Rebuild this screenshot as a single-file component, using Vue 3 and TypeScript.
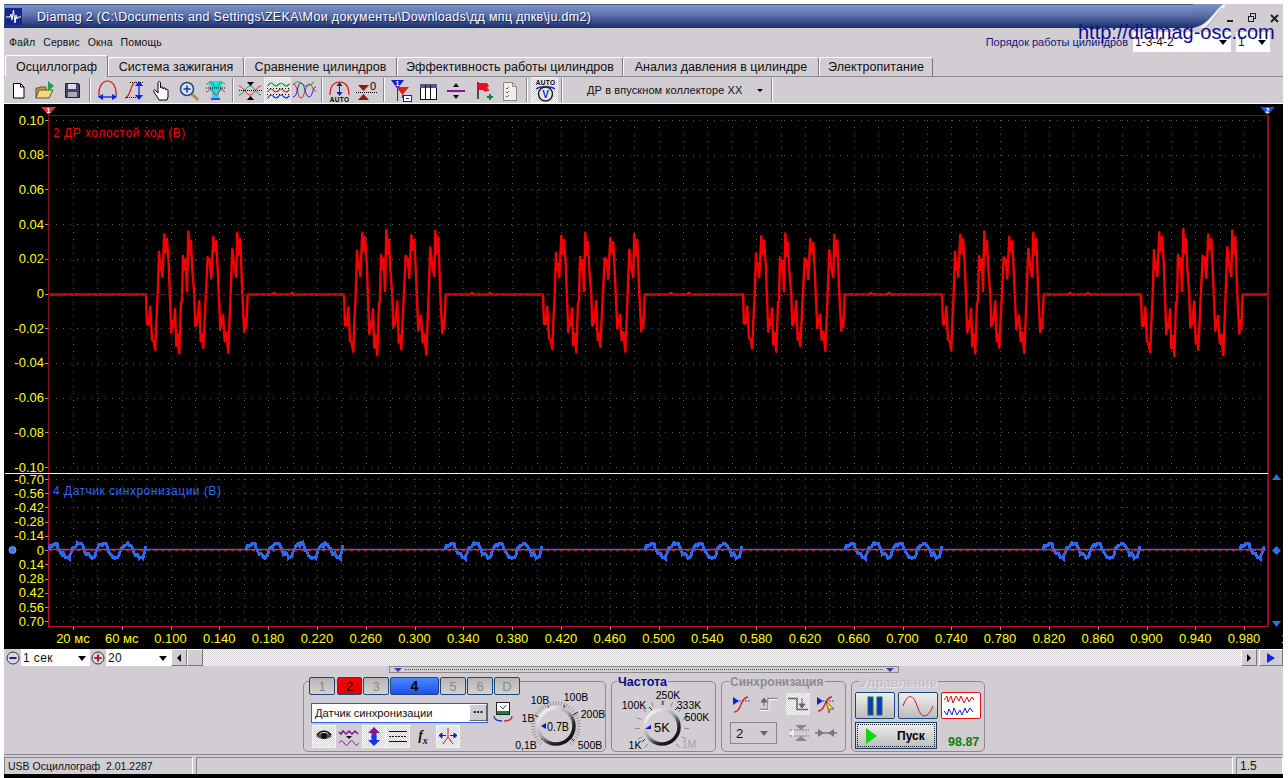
<template>
  <div class="window">
    <div class="titlebar">
      <div class="title-fill">
        <svg class="app-icon" width="17" height="17" viewBox="0 0 17 17">
          <rect width="17" height="17" fill="#16268a" />
          <path d="M1 9h4l1-3 1 6 1.500-10 1.500 13 1-8 1 4 1-2h3" fill="none" stroke="#fff" stroke-width="1" />
        </svg>
        <span class="title-text">Diamag 2 (C:\Documents and Settings\ZEKA\Мои документы\Downloads\дд мпц дпкв\ju.dm2)</span>
      </div>
      <svg class="swoosh" width="32" height="24" viewBox="0 0 32 24">
        <defs>
          <linearGradient id="tg" x1="0" y1="0" x2="0" y2="1">
            <stop offset="0" stop-color="#7d92c8" />
            <stop offset="0.45" stop-color="#5a72ad" />
            <stop offset="1" stop-color="#1b2c6c" />
          </linearGradient>
        </defs>
        <path d="M0 0H32C22 4 18 20 0 24Z" fill="url(#tg)" />
        <path d="M32 1C24 5 20 18 8 24" fill="none" stroke="#f2f3f6" stroke-width="3" />
        <path d="M29 4C24 9 20 17 12 24" fill="none" stroke="#9fa7bd" stroke-width="1" />
      </svg>
      <svg class="win-btns" width="58" height="24" viewBox="1225 4 58 24">
        <rect x="1227" y="20" width="6" height="2" fill="#222" />
        <rect x="1250.500" y="13.500" width="5" height="5" fill="none" stroke="#222" />
        <rect x="1248.500" y="16.500" width="5" height="5" fill="#d1cdd2" stroke="#222" />
        <path d="M1271 15l7 7M1278 15l-7 7" stroke="#222" stroke-width="2" />
      </svg>
    </div>

    <div class="menubar">
      <span class="menu-item" v-for="m in menus" :key="m">{{ m }}</span>
      <div class="order">
        <span class="order-label">Порядок работы цилиндров</span>
        <div class="combo order-combo">1-3-4-2<i class="drop"></i></div>
        <div class="combo order-combo small">1<i class="drop"></i></div>
      </div>
    </div>
    <span class="watermark">http://diamag-osc.com</span>

    <div class="tabs">
      <div v-for="(t, i) in tabs" :key="t.label" class="tab" :class="{ active: i === 0 }" :style="{ width: t.w + 'px' }">{{ t.label }}</div>
    </div>

    <div class="toolbar">
      <button class="tb"><svg width="27" height="27"><path d="M8.500 6.500h7l3.500 3.500v11H8.500z" fill="#fff" stroke="#000" /><path d="M15.500 6.500v3.500H19" fill="none" stroke="#000" /></svg></button>
      <button class="tb"><svg width="27" height="27"><path d="M4 21V11h3l1-1h6v3" fill="#c8a040" stroke="#554" /><path d="M4 21l3-8h14l-4 8z" fill="#f4d878" stroke="#554" /><path d="M16 4l6 5-6 5z" fill="#20a050" /></svg></button>
      <button class="tb"><svg width="27" height="27"><path d="M6.500 6.500h13l1 1v13h-14z" fill="#45457c" stroke="#223" /><rect x="9" y="7" width="8" height="5" fill="#ddd" /><rect x="9" y="15" width="9" height="5" fill="#aaa" /></svg></button>
      <i class="sep"></i>
      <button class="tb"><svg width="27" height="27"><path d="M5 20C4 9 9 4 13.500 4S23 9 22 20" fill="none" stroke="#e01010" stroke-width="1.200" /><path d="M6 20h15" stroke="#1020e0" stroke-width="1.300" /><path d="M4 20l5-3v6zM23 20l-5-3v6z" fill="#1020e0" /></svg></button>
      <button class="tb"><svg width="27" height="27"><path d="M9 5.500h13M4 20.500h13" stroke="#000" stroke-dasharray="1 1" /><path d="M4 21C10 21 9 5 15 5" fill="none" stroke="#e01010" stroke-width="1.200" /><path d="M18 8v12" stroke="#1020e0" stroke-width="1.300" /><path d="M18 4l-4 5h8zM18 23l-4-5h8z" fill="#1020e0" /></svg></button>
      <button class="tb"><svg width="27" height="27"><path d="M10 21l-4-6c-1-2 1-3 2-1l2 2V6c0-2 2.500-2 2.500 0v5c0-1.500 2.500-1.500 2.500 0v1c0-1.500 2.500-1.500 2.500 0v1c0-1.500 2.500-1 2.500 .5V20l-1 3H11z" fill="#fff" stroke="#000" /></svg></button>
      <button class="tb"><svg width="27" height="27"><path d="M17 17l6 6" stroke="#b09048" stroke-width="3" /><circle cx="12" cy="12" r="6.500" fill="#d8e4f4" stroke="#284878" stroke-width="1.600" /><path d="M8.500 12h7M12 8.500v7" stroke="#1838a8" stroke-width="1.600" /></svg></button>
      <button class="tb"><svg width="27" height="27"><path d="M7 4h13v8l-3 4v5H10v-5l-3-4z" fill="#20e0e0" /><path d="M4 7c3 0 3-2 5-2s3 6 5 6 3-6 5-6 2 2 4 2" fill="none" stroke="#10a040" /><path d="M4 15c3 0 3-3 5-3s3 6 5 6 3-6 5-6 2 3 4 3" fill="none" stroke="#e02020" /><path d="M4 11h19" stroke="#000" stroke-dasharray="1 1" /><path d="M9 22h9" stroke="#1020e0" stroke-width="1.500" /></svg></button>
      <i class="sep"></i>
      <button class="tb"><svg width="27" height="27"><path d="M2 9c4 0 7 9 11 9s7-9 11-9" fill="none" stroke="#e02020" /><path d="M2 18c4 0 7-9 11-9s7 9 11 9" fill="none" stroke="#10a040" /><path d="M2 13.500h23" stroke="#000" stroke-dasharray="1 1" /><path d="M10 5h7l-3.500 4zM10 23h7l-3.500-4z" fill="#000" /></svg></button>
      <button class="tb pressed"><svg width="27" height="27"><path v-for="(c, i) in ['#109040', '#e02020', '#1030e0']" :key="c" :d="`M2 ${9 + i * 6}c2 0 2-3 4-3s3 3 5 3 3-3 5-3 3 3 5 3 2-2 4-2`" fill="none" :stroke="c" stroke-width="1.200" /><path d="M2 11.500h23M2 17.500h23" stroke="#000" stroke-dasharray="1 2" /></svg></button>
      <button class="tb"><svg width="27" height="27"><path d="M2 7c5 0 4 14 8 14s4-14 8-14 3 7 7 7" fill="none" stroke="#e02020" /><path d="M2 20c5 0 4-14 8-14s4 14 8 14 3-10 7-10" fill="none" stroke="#1030e0" /><path d="M2 8c3-4 6-4 9-1s6 3 12-2" fill="none" stroke="#109040" /></svg></button>
      <i class="sep"></i>
      <button class="tb"><svg width="27" height="27"><path d="M4 18C4 9 8 5 13.500 5S23 9 23 18" fill="none" stroke="#e01010" stroke-width="1.200" /><path d="M13.500 7v10" stroke="#1020a0" /><path d="M13.500 5l-3 4h6zM13.500 19l-3-4h6z" fill="#1020a0" /><text x="13.500" y="25" class="tiny-auto">AUTO</text></svg></button>
      <button class="tb"><svg width="27" height="27"><path d="M5 8h11l-5.500 6zM5 23h11l-5.500-6z" fill="#8a1c1c" /><path d="M3 15.500h21" stroke="#000" stroke-dasharray="1 1" /><text x="20" y="13" class="tb-zero">0</text></svg></button>
      <i class="sep"></i>
      <button class="tb"><svg width="27" height="27"><path d="M3 3h13l-6.500 9z" fill="#1020d0" /><path d="M8 10h13l-6.500 8z" fill="#e02020" /><path d="M9.500 12v12M14.500 18v3" stroke="#333" /><text x="9.500" y="9" class="tb-tag">1</text><rect x="15.500" y="18.500" width="8" height="6" fill="#fff" stroke="#1a2a70" /><path d="M18 21.500h3" stroke="#1a2a70" /></svg></button>
      <button class="tb"><svg width="27" height="27"><rect x="5.500" y="7.500" width="16" height="15" fill="#fff" stroke="#112" /><rect x="5" y="7" width="17" height="4" fill="#50588c" /><path d="M10.500 8v14M15.500 8v14" stroke="#112" /></svg></button>
      <button class="tb"><svg width="27" height="27"><rect x="5" y="13" width="18" height="2" fill="#801890" /><path d="M11 10h6l-3-4zM11 18h6l-3 4z" fill="#111" /></svg></button>
      <button class="tb"><svg width="27" height="27"><path d="M9 5v17" stroke="#222" stroke-width="1.500" /><path d="M9 6h9l2 3-2 2 3 2-5 2-2-2H9z" fill="#e81020" /><path d="M18 20h6M21 17v6" stroke="#108030" stroke-width="2" /></svg></button>
      <button class="tb"><svg width="27" height="27"><path d="M7.500 5.500h9l4 4v14h-13z" fill="#eeeeea" stroke="#888" /><path d="M16.500 5.500v4h4" fill="none" stroke="#888" /><path d="M10 11l1 1 2-2M10 15l1 1 2-2M10 19l1 1 2-2" fill="none" stroke="#666" /></svg></button>
      <i class="sep"></i>
      <button class="tb pressed"><svg width="27" height="27"><text x="13.500" y="8" class="tiny-auto">AUTO</text><path d="M4 12c4-3 15-3 19 0" fill="none" stroke="#1030d0" stroke-width="1.500" /><circle cx="13.500" cy="17" r="7" fill="#e8e8e8" stroke="#222" stroke-width="1.500" /><text x="13.500" y="21" class="tb-v">V</text></svg></button>
      <i class="sep last"></i>
      <div class="tb-combo"><span>ДР в впускном коллекторе ХХ</span><i class="drop tiny"></i></div>
      <i class="sep"></i>
    </div>

    <div class="scope">
      <svg class="plot" width="1279" height="545" viewBox="4 104 1279 545">
        <defs>
          <clipPath id="plotClip"><rect x="48" y="116" width="1219" height="510" /></clipPath>
        </defs>
        <path :d="gridPath" class="grid" />
        <line x1="48.500" y1="107" x2="48.500" y2="473" stroke="#8a0c14" />
        <line x1="48.500" y1="473" x2="48.500" y2="626" stroke="#c0102c" />
        <line x1="48" y1="115.500" x2="1268" y2="115.500" stroke="#7c0a10" />
        <line x1="48" y1="626.500" x2="1268" y2="626.500" stroke="#c0102c" />
        <line x1="1268.500" y1="115" x2="1268.500" y2="626" stroke="#a0101c" />
        <line x1="1267.500" y1="107" x2="1267.500" y2="626" stroke="#1818d8" />
        <path :d="tickPath" stroke="#999" fill="none" />
        <line x1="5" y1="473.500" x2="1268" y2="473.500" stroke="#f4f4f4" />

        <g clip-path="url(#plotClip)">
          <polyline :points="redLine" class="trace-red" />
          <line x1="48.500" x2="1267" y1="294.500" y2="294.500" class="zero-top" />
          <line x1="49" x2="1266" y1="549.500" y2="549.500" stroke="#2c68f0" stroke-width="1.500" />
          <polyline v-for="(b, i) in blueBursts" :key="i" :points="b" class="trace-blue" />
          <line x1="49" x2="1266" y1="550.500" y2="550.500" class="zero-low" />
        </g>

        <text v-for="l in yLabels" :key="l.y" class="axis end" x="44" :y="l.y">{{ l.t }}</text>
        <text v-for="l in xLabels" :key="l.x" class="axis mid" :x="l.x" y="638">{{ l.t }}</text>
        <text class="axis" x="1281" y="638">1</text>
        <text class="chan red" x="53" y="137">2 ДР холостой ход (В)</text>
        <text class="chan blue" x="53" y="495">4 Датчик синхронизации (В)</text>

        <path d="M41 107h15l-7.500 8z" fill="#f02858" />
        <text x="48.500" y="113" class="marker">1</text>
        <path d="M1260 107h15l-7.500 8z" fill="#1c4cf0" />
        <text x="1267.500" y="113" class="marker">2</text>
        <circle cx="12.500" cy="550" r="3.500" fill="#3c78f0" stroke="#7ca4f4" />
        <path d="M1272 480l4.500-6 4.500 6zM1272 621l4.500 6 4.500-6zM1276.500 546l4.500 4.500-4.500 4.500-4.500-4.500z" fill="#2c70e8" />
      </svg>
    </div>

    <div class="scrollrow">
      <button class="round"><svg width="14" height="14"><circle cx="7" cy="7" r="6" fill="#d8d8e0" stroke="#333" /><path d="M3.500 7h7" stroke="#1020a0" stroke-width="2" /></svg></button>
      <div class="combo flat w1">1 сек<i class="drop"></i></div>
      <button class="round"><svg width="14" height="14"><circle cx="7" cy="7" r="6" fill="#d8d8e0" stroke="#333" /><path d="M3.500 7h7M7 3.500v7" stroke="#c01020" stroke-width="2" /></svg></button>
      <div class="combo flat w2">20<i class="drop"></i></div>
      <button class="sb"><i class="tri-left"></i></button>
      <button class="sb thumb"></button>
      <div class="track"></div>
      <button class="sb"><i class="tri-right"></i></button>
      <button class="sb play"><i class="tri-blue"></i></button>
    </div>

    <div class="panel">
      <div class="splitter"><i class="spl-tri"></i><span class="spl-dots"></span><i class="spl-tri"></i></div>
      <div class="groups">
        <div class="group g1">
          <div class="chan-col">
            <div class="chan-btns">
              <button v-for="c in channels" :key="c.t" class="ch" :class="c.cls">{{ c.t }}</button>
            </div>
            <div class="sensor-row">
              <div class="sensor">
                <span>Датчик синхронизации</span>
                <button class="dots">...</button>
              </div>
              <svg class="meter" width="20" height="21" viewBox="0 0 20 21"><rect x="3.500" y=".5" width="13" height="12" fill="#fff" stroke="#222" /><rect x="4" y="9" width="12" height="3" fill="#108040" /><path d="M7 4l3 3 3-4" fill="none" stroke="#444" /><path d="M1 14c0 5 6 5 8 5" fill="none" stroke="#1030d0" stroke-width="1.300" /><path d="M19 14c0 5-6 5-8 5" fill="none" stroke="#e02020" stroke-width="1.300" /></svg>
            </div>
            <div class="tool-row">
              <button class="gb pressed"><svg width="22" height="21"><path d="M3 10c4-4 12-4 16 0-4 4-12 4-16 0z" fill="#555" /><circle cx="11" cy="10" r="3" fill="#111" /><path d="M4 9c4-5 10-5 14 0" fill="none" stroke="#111" stroke-width="1.500" /></svg></button>
              <button class="gb plain"><svg width="22" height="21"><path d="M1 6l2 2 2-3 3 3 3-3 3 3 3-3 3 3" fill="none" stroke="#801890" stroke-width="1.500" /><path d="M8 10h6l-3 3z" fill="#111" /><path d="M1 17c2-3 3-3 5 0s3 3 5 0 3-3 5 0 3 2 5 0" fill="none" stroke="#801890" /></svg></button>
              <button class="gb pressed"><svg width="22" height="21"><path d="M11 1l6 6h-3.500v5h-5V7H5z" fill="#801890" /><path d="M11 20l6-6h-3.500V10h-5v4H5z" fill="#1038e8" /></svg></button>
              <button class="gb pressed"><svg width="22" height="21"><path d="M2 5.500h18M2 15.500h18" stroke="#111" /><path d="M2 10.500h18" stroke="#111" stroke-dasharray="2 1" /></svg></button>
              <span class="fx">f<sub>x</sub></span>
              <button class="gb pressed"><svg width="22" height="21"><path d="M11 2v9M11 11l-5 7M11 11l5 7" stroke="#d02020" fill="none" /><path d="M2 9.500h7M2 9.500l3-2.500v5zM20 9.500h-7M20 9.500l-3-2.500v5z" stroke="#1020c0" fill="#1020c0" /></svg></button>
            </div>
          </div>
          <svg class="knob" width="102" height="71" viewBox="504 681 102 71">
            <defs>
              <linearGradient id="kg" x1="0.150" y1="0.100" x2="0.850" y2="0.900">
                <stop offset="0" stop-color="#f0f0f0" />
                <stop offset="0.450" stop-color="#a8a8a8" />
                <stop offset="0.750" stop-color="#2a2a2a" />
                <stop offset="1" stop-color="#101010" />
              </linearGradient>
            </defs>
            <path :d="knobTicks1" stroke="#989898" stroke-width="1" />
            <path d="M535 714l5 3M548 705l2 3M565 704l-2 4M578 711l-5 3M541 739l3-3M571 737l3 3" stroke="#222" />
            <circle cx="556" cy="725" r="18" fill="none" stroke="url(#kg)" stroke-width="3.500" />
            <path d="M541 725l5-3v6z" fill="#1010e0" />
            <text x="558" y="730" class="knob-val" textLength="22" lengthAdjust="spacingAndGlyphs">0.7В</text>
            <text v-for="l in knob1" :key="l.t" class="knob-lab" :x="l.x" :y="l.y">{{ l.t }}</text>
          </svg>
        </div>

        <div class="group g2">
          <span class="legend navy">Частота</span>
          <svg class="knob" width="104" height="70" viewBox="612 682 104 70">
            <path :d="knobTicks2" stroke="#8a8a8a" stroke-width="1" />
            <path d="M649 707l3 3M663 701v4M678 707l-3 3M688 716l-4 2M642 742l3-3" stroke="#222" />
            <circle cx="662" cy="727" r="17" fill="none" stroke="url(#kg)" stroke-width="3.500" />
            <path d="M645 729l6-4v4z" fill="#1010e0" />
            <text x="662" y="732" class="knob-val">5K</text>
            <text v-for="l in knob2" :key="l.t" class="knob-lab" :class="{ off: l.t === '1M' }" :x="l.x" :y="l.y">{{ l.t }}</text>
          </svg>
        </div>

        <div class="group g3">
          <span class="legend grey">Синхронизация</span>
          <div class="sync-row">
            <button class="sy"><svg width="24" height="22"><path d="M3 8h18" stroke="#1020d0" stroke-dasharray="1.500 1.500" /><path d="M3 4l6 4-6 4z" fill="#1020d0" /><path d="M4 19c8 0 6-15 14-15" fill="none" stroke="#e01818" stroke-width="1.300" /></svg></button>
            <button class="sy"><svg width="24" height="22"><path d="M2 16.500h8v-11h10" fill="none" stroke="#888" stroke-width="1.500" /><path d="M2 17.500h9v-11h9" fill="none" stroke="#fff" /><path d="M6 13V7M6 5l-3 4h6z" stroke="#666" fill="#666" /></svg></button>
            <button class="sy pressed"><svg width="24" height="22"><path d="M2 5.500h9v11h11" fill="none" stroke="#666" stroke-width="1.500" /><path d="M16 5v8M16 15l-3-4h6z" stroke="#666" fill="#666" /></svg></button>
            <button class="sy"><svg width="24" height="22"><path d="M3 8h18" stroke="#1020d0" stroke-dasharray="1.500 1.500" /><path d="M3 4l6 4-6 4z" fill="#1020d0" /><path d="M4 18c8 0 6-14 14-14" fill="none" stroke="#e01818" stroke-width="1.300" /><path d="M12 8l8 8-4 0-1 4z" fill="#ffd820" stroke="#222" stroke-width=".6" /></svg></button>
          </div>
          <div class="sync-row second">
            <div class="combo sync-combo">2<i class="drop grey-drop"></i></div>
            <button class="sy wide"><svg width="24" height="22"><path d="M3 8h19M3 14h19" stroke="#777" stroke-dasharray="2 1" /><path d="M8 3h12l-6 5zM8 19h12l-6-5z" fill="#888" /><path d="M2 11l5-4v8z" fill="#eee" /></svg></button>
            <button class="sy"><svg width="24" height="22"><path d="M1 11h22" stroke="#777" stroke-width="1.500" /><path d="M10 11l-6-4v8zM14 11l6-4v8z" fill="#777" /></svg></button>
          </div>
        </div>

        <div class="group g4">
          <span class="legend faint">Управление</span>
          <div class="ctl-row">
            <button class="ctl"><svg width="18" height="20"><rect x="2" y="1" width="5" height="18" fill="#1030d0" stroke="#108030" /><rect x="11" y="1" width="5" height="18" fill="#1030d0" stroke="#108030" /></svg></button>
            <button class="ctl"><svg width="32" height="22"><path d="M1 11C5 0 9 0 12 4c3 4 5 17 10 17 4 0 7-5 9-10" fill="none" stroke="#e01010" /></svg></button>
            <button class="ctl mode"><svg width="36" height="23"><path d="M1 6l3-4 1 6 3-6 2 7 3-7 3 5 2-5 3 7 3-6 2 5 3-5 2 3" fill="none" stroke="#e01010" /><path d="M1 17l3 4 2-6 3 6 2-7 3 7 3-5 2 5 3-7 2 5 3-5 3 4" fill="none" stroke="#1020d0" /></svg></button>
          </div>
          <div class="ctl-row">
            <button class="start"><i class="tri-green"></i><b>Пуск</b></button>
            <span class="rate">98.87</span>
          </div>
        </div>
      </div>
    </div>

    <div class="statusbar">
      <div class="cell s1">USB Осциллограф&nbsp;&nbsp;2.01.2287</div>
      <div class="cell s2"></div>
      <div class="cell s3">1.5</div>
    </div>
  </div>
</template>

<script setup lang="ts">
const menus = ['Файл', 'Сервис', 'Окна', 'Помощь']
const tabs = [
  { label: 'Осциллограф', w: 103 },
  { label: 'Система зажигания', w: 136 },
  { label: 'Сравнение цилиндров', w: 153 },
  { label: 'Эффективность работы цилиндров', w: 226 },
  { label: 'Анализ давления в цилиндре', w: 196 },
  { label: 'Электропитание', w: 114 },
]
const channels = [
  { t: '1', cls: '' },
  { t: '2', cls: 'on-red' },
  { t: '3', cls: '' },
  { t: '4', cls: 'on-blue' },
  { t: '5', cls: '' },
  { t: '6', cls: '' },
  { t: 'D', cls: '' },
]

const STEP_X = 24.4
const LEFT = 48.5

const yTop = Array.from({ length: 11 }, (_, i) => {
  const v = 0.1 - i * 0.02
  return { y: 120 + i * 34.7, t: Math.abs(v) < 0.001 ? '0' : v.toFixed(2) }
})
const yLow = Array.from({ length: 11 }, (_, i) => {
  const v = -0.7 + i * 0.14
  return { y: 479 + i * 14.23, t: Math.abs(v) < 0.001 ? '0' : v.toFixed(2) }
})
const yLabels = [...yTop, ...yLow]

const xLabels = Array.from({ length: 25 }, (_, i) => {
  const k = 1 + i * 2
  const t = k === 1 ? '20 мс' : k === 3 ? '60 мс' : (k * 0.02).toFixed(3)
  return { x: LEFT + k * STEP_X, t }
})

let grid = ''
for (const l of yLabels) grid += `M49 ${Math.round(l.y) + 0.5}H1267`
for (let k = 1; k < 50; k++) {
  const x = Math.round(LEFT + k * STEP_X) + 0.5
  grid += `M${x} 120V467M${x} 479V625`
}
const gridPath = grid

let ticks = ''
for (const l of yLabels) ticks += `M45 ${Math.round(l.y) + 0.5}H48`
for (const l of xLabels) ticks += `M${Math.round(l.x) + 0.5} 627V630`
const tickPath = ticks

// traced from the reference: one burst of each channel, in zoomed pixels
const redShape = [47,225,50,315,55,315,60,262,65,360,70,365,75,392,78,310,82,225,86,97,90,150,93,130,96,172,102,45,105,100,110,58,115,130,120,260,123,340,127,305,130,320,134,268,138,380,142,345,147,402,152,250,155,245,158,110,162,150,166,120,170,215,174,36,178,105,182,65,186,150,192,225,195,320,200,310,207,245,211,365,215,345,219,385,225,260,232,113,238,120,243,177,249,52,253,95,258,65,263,170,270,330,273,310,278,287,283,365,288,340,294,400,300,250,306,88,310,125,313,150,318,172,321,40,325,105,330,58,336,225,342,338,345,300,348,325,352,225]
const blueShape = [146,265,150,255,160,255,165,248,172,250,178,270,185,282,190,278,197,290,207,292,212,278,218,262,225,262,232,250,245,250,250,262,258,282,265,278,272,290,282,292,290,270,295,255,305,252,318,248,325,270,332,283,340,292,355,292,360,275,368,258,378,255,385,248,392,255,400,268,405,285,412,280,418,292,428,292,435,270,438,255,441,268]

const redStarts = [146, 344, 543, 743, 942, 1141]
const redScale = [1, 1.03, 0.98, 0.97, 1, 1.04]
const blueStarts = [48.5, 246, 445, 645, 845, 1043, 1240]

const redPts: string[] = ['49,294.5']
redStarts.forEach((s, b) => {
  for (let i = 0; i < redShape.length; i += 2) {
    const x = s + (redShape[i] - 47) / 3
    const y = 294.5 + ((redShape[i + 1] - 225) / 3) * redScale[b]
    redPts.push(`${x.toFixed(1)},${y.toFixed(1)}`)
  }
  const end = s + 102
  redPts.push(`${end + 24},294.5`, `${end + 26},293`, `${end + 28},294.5`, `${end + 42},294.5`, `${end + 44},293`, `${end + 46},294.5`)
})
redPts.push('1266,294.5')
const redLine = redPts.join(' ')

// stair-stepped, like the low resolution trace in the picture
const blueBursts = blueStarts.map((s) => {
  const pts: string[] = []
  let step = 0
  for (let i = 0; i + 3 < blueShape.length; i += 2) {
    const x0 = s + (blueShape[i] - 146) / 3
    const x1 = s + (blueShape[i + 2] - 146) / 3
    const y0 = 550 + (blueShape[i + 1] - 270) / 3
    const y1 = 550 + (blueShape[i + 3] - 270) / 3
    for (let x = x0; x < x1; x += 1) {
      if (x > 1265) break
      const y = y0 + ((y1 - y0) * (x - x0)) / (x1 - x0) + (step++ % 4 === 0 ? 1 : 0)
      pts.push(`${Math.round(x)},${Math.round(y)}`)
    }
  }
  return pts.join(' ')
})

function ring(cx: number, cy: number, r1: number, r2: number, from: number, to: number, n: number) {
  let d = ''
  for (let i = 0; i <= n; i++) {
    const a = ((from + ((to - from) * i) / n) * Math.PI) / 180
    const c = Math.cos(a)
    const s = Math.sin(a)
    d += `M${(cx + r1 * c).toFixed(1)} ${(cy + r1 * s).toFixed(1)}L${(cx + r2 * c).toFixed(1)} ${(cy + r2 * s).toFixed(1)}`
  }
  return d
}
const knobTicks1 = ring(556, 725, 21, 25, 130, 410, 40)
const knobTicks2 = ring(662, 727, 22, 27, 130, 410, 12)

const knob1 = [
  { t: '10В', x: 540, y: 703 },
  { t: '100В', x: 576, y: 700 },
  { t: '1В', x: 528, y: 721 },
  { t: '200В', x: 593, y: 717 },
  { t: '0,1В', x: 526, y: 748 },
  { t: '500В', x: 590, y: 748 },
]
const knob2 = [
  { t: '100K', x: 634, y: 709 },
  { t: '250K', x: 668, y: 699 },
  { t: '333K', x: 689, y: 709 },
  { t: '500K', x: 697, y: 721 },
  { t: '1K', x: 635, y: 749 },
  { t: '1M', x: 689, y: 748 },
]
</script>

<style scoped>
.window {
  position: relative;
  margin: 4px 0 0 4px;
  width: 1279px;
  height: 774px;
  background: #000;
  overflow: hidden;
  display: flex;
  flex-direction: column;
  font-family: "Liberation Sans", Arial, sans-serif;
  font-size: 12px;
  color: #111;
}

button {
  padding: 0;
  margin: 0;
  border: none;
  background: none;
  font-family: inherit;
  display: flex;
  align-items: center;
  justify-content: center;
}

i {
  display: block;
}

.titlebar {
  display: flex;
  height: 24px;
  flex: none;
  background: #d1cdd2;
}

.title-fill {
  width: 1193px;
  display: flex;
  align-items: center;
  gap: 15px;
  padding-left: 1px;
  box-sizing: border-box;
  background: linear-gradient(#7d92c8 0, #5a72ad 45%, #1b2c6c 100%);
  border-top: 1px solid #46598f;
}

.title-text {
  color: #fff;
  font-size: 12.5px;
  letter-spacing: 0.31px;
  text-shadow: 1px 1px 1px #101c50;
  white-space: nowrap;
}

.swoosh {
  flex: none;
}

.win-btns {
  flex: none;
  margin-left: auto;
}

.menubar {
  display: flex;
  align-items: center;
  height: 27px;
  flex: none;
  padding-left: 5px;
  gap: 8px;
  background: #d1cdd2;
  font-size: 10.5px;
  letter-spacing: 0.1px;
}

.order {
  margin-left: auto;
  display: flex;
  align-items: center;
  gap: 5px;
  padding-right: 13px;
  letter-spacing: 0;
}

.order-label {
  color: #14147c;
  font-size: 11px;
}

.combo {
  position: relative;
  background: #fff;
  display: flex;
  align-items: center;
  box-sizing: border-box;
  font-size: 12px;
}

.order-combo {
  width: 98px;
  height: 20px;
  padding-left: 2px;
}

.order-combo.small {
  width: 34px;
}

.drop {
  position: absolute;
  right: 4px;
  top: calc(50% - 2px);
  width: 0;
  height: 0;
  border: 4px solid transparent;
  border-top: 5px solid #000;
  border-bottom: none;
}

.drop.tiny {
  position: static;
  margin-left: 15px;
  border-width: 3px;
  border-top-width: 3px;
  border-bottom: none;
}

.grey-drop {
  border-top-color: #666;
  right: 8px;
}

.watermark {
  position: absolute;
  left: 1074px;
  top: 17px;
  font-size: 20px;
  color: #0d0d8c;
  white-space: nowrap;
}

.tabs {
  display: flex;
  align-items: flex-end;
  height: 21px;
  flex: none;
  background: #d1cdd2;
  padding-left: 1px;
}

.tab {
  height: 19px;
  flex: none;
  box-sizing: border-box;
  display: flex;
  align-items: center;
  justify-content: center;
  font-size: 12.5px;
  letter-spacing: 0.05px;
  border: 1px solid #fff;
  border-bottom: none;
  border-right: 1px solid #777;
  border-radius: 3px 3px 0 0;
  white-space: nowrap;
  background: #d1cdd2;
}

.tab.active {
  height: 22px;
  margin-bottom: -1px;
  position: relative;
  z-index: 1;
}

.toolbar {
  display: flex;
  align-items: center;
  height: 28px;
  flex: none;
  box-sizing: border-box;
  padding-left: 1px;
  background: #d1cdd2;
  border-top: 1px solid #8a8a8a;
  border-bottom: 1px solid #fff;
}

.tb {
  width: 27px;
  height: 26px;
  flex: none;
}

.tb svg {
  display: block;
}

.pressed {
  background: repeating-conic-gradient(#fff 0 25%, #d1cdd2 0 50%) 0 0 / 2px 2px;
}

.tb.pressed {
  border: 1px solid #eee;
  box-sizing: border-box;
}

.sep {
  width: 2px;
  height: 24px;
  flex: none;
  margin: 0 3px;
  background: linear-gradient(90deg, #888 50%, #fff 50%);
}

.sep.last {
  margin-right: 0;
}

.tb-combo {
  display: flex;
  align-items: center;
  width: 205px;
  padding-left: 24px;
  box-sizing: border-box;
  font-size: 11px;
  letter-spacing: 0.1px;
}

.tiny-auto {
  font-size: 6.5px;
  font-weight: bold;
  text-anchor: middle;
  letter-spacing: 0.3px;
}

.tb-zero {
  font-size: 11px;
  text-anchor: middle;
}

.tb-tag {
  font-size: 7px;
  fill: #fff;
  font-weight: bold;
  text-anchor: middle;
}

.tb-v {
  font-size: 10px;
  font-weight: bold;
  fill: #1030d0;
  text-anchor: middle;
}

.scope {
  height: 545px;
  flex: none;
  background: #000;
}

.plot {
  display: block;
}

.grid {
  stroke: #5c5c5c;
  stroke-width: 1;
  stroke-dasharray: 1 6;
  fill: none;
}

.zero-top {
  stroke: #7a0808;
  stroke-dasharray: 3 3;
}

.zero-low {
  stroke: #e01010;
  stroke-dasharray: 3 4;
}

.trace-red {
  fill: none;
  stroke: #f40000;
  stroke-width: 2.4;
  stroke-linejoin: round;
}

.trace-blue {
  fill: none;
  stroke: #2c68f0;
  stroke-width: 3;
  shape-rendering: crispEdges;
}

.axis {
  fill: #ffff00;
  font-size: 13px;
  dominant-baseline: central;
}

.axis.end {
  text-anchor: end;
}

.axis.mid {
  text-anchor: middle;
}

.chan {
  font-size: 12px;
  letter-spacing: 0.5px;
}

.chan.red {
  fill: #f00000;
}

.chan.blue {
  fill: #3366f0;
}

.marker {
  fill: #fff;
  font-size: 7px;
  font-weight: bold;
  text-anchor: middle;
}

.scrollrow {
  display: flex;
  height: 17px;
  flex: none;
  padding-left: 1px;
  background: #d1cdd2;
}

.round {
  width: 16px;
  height: 17px;
  flex: none;
}

.flat {
  font-size: 12px;
  padding-left: 2px;
  letter-spacing: 0.4px;
}

.w1 {
  width: 69px;
}

.w2 {
  width: 65px;
}

.sb {
  width: 16px;
  height: 17px;
  flex: none;
  box-sizing: border-box;
  background: #d1cdd2;
  border: 1px solid;
  border-color: #fff #777 #777 #fff;
}

.track {
  flex: 1;
  background: repeating-conic-gradient(#fff 0 25%, #d1cdd2 0 50%) 0 0 / 2px 2px;
}

.play {
  width: 24px;
  margin-left: 2px;
}

.tri-left,
.tri-right,
.tri-blue {
  width: 0;
  height: 0;
  border: 4px solid transparent;
  border-left: none;
  border-right: 4px solid #000;
}

.tri-right {
  border-right: none;
  border-left: 4px solid #000;
}

.tri-blue {
  border-width: 5px;
  border-right: none;
  border-left: 8px solid #1020e8;
}

.panel {
  height: 89px;
  flex: none;
  box-sizing: border-box;
  background: #d1cdd2;
  border-bottom: 1px solid #888;
}

.splitter {
  display: flex;
  align-items: center;
  gap: 3px;
  width: 510px;
  height: 7px;
  margin-left: 385px;
  padding: 0 4px;
  box-sizing: border-box;
  border: 1px solid #888;
}

.spl-tri {
  width: 0;
  height: 0;
  border: 4px solid transparent;
  border-top: 4px solid #3040b0;
  border-bottom: none;
  flex: none;
}

.spl-dots {
  flex: 1;
  border-top: 1px dotted #555;
}

.groups {
  display: flex;
  gap: 5px;
  padding: 8px 0 0 299px;
  height: 71px;
}

.group {
  position: relative;
  height: 71px;
  box-sizing: border-box;
  border: 1px solid #8a8a8a;
  border-radius: 5px;
  flex: none;
}

.legend {
  position: absolute;
  left: 7px;
  top: -7px;
  padding: 0 1px;
  font-size: 12px;
  font-weight: bold;
  background: #d1cdd2;
  white-space: nowrap;
}

.legend.navy {
  left: 5px;
  font-size: 12.5px;
  color: #0c0c80;
}

.legend.grey {
  color: #8c8c8c;
}

.legend.faint {
  font-size: 13px;
  color: #c2c0c4;
  text-shadow: 1px 1px 0 #e8e8ea;
}

.g1 {
  width: 303px;
  display: flex;
}

.chan-col {
  width: 200px;
  flex: none;
  margin-top: -5px;
  padding-left: 5px;
  box-sizing: border-box;
}

.chan-btns {
  display: flex;
  gap: 1px;
}

.ch {
  width: 26px;
  height: 18px;
  flex: none;
  box-sizing: border-box;
  border: 1px solid #1c4a78;
  border-radius: 2px;
  background: linear-gradient(#b4b4b4, #d2d2d2);
  color: #8a8a8a;
  font-size: 13px;
}

.ch.on-red {
  width: 25px;
  margin-left: 1px;
  background: linear-gradient(#ff0000, #d80000);
  color: #200000;
}

.ch.on-blue {
  width: 49px;
  background: linear-gradient(#4c88ff, #1c50e8);
  color: #000;
  font-weight: bold;
  font-size: 14px;
}

.sensor-row {
  display: flex;
  align-items: center;
  gap: 5px;
  margin-top: 7px;
  margin-left: 2px;
}

.sensor {
  width: 177px;
  height: 20px;
  flex: none;
  box-sizing: border-box;
  border: 1px solid #2a60f0;
  background: #fff;
  display: flex;
  align-items: center;
  justify-content: space-between;
  padding-left: 3px;
  font-size: 11.2px;
  white-space: nowrap;
}

.meter {
  flex: none;
}

.dots {
  width: 18px;
  height: 17px;
  box-sizing: border-box;
  background: #d1cdd2;
  border: 1px solid;
  border-color: #fff #666 #666 #fff;
  font-size: 12px;
  font-weight: bold;
  line-height: 8px;
  align-items: flex-start;
}

.tool-row {
  display: flex;
  align-items: center;
  margin: 2px 0 0 3px;
}

.gb {
  width: 24px;
  height: 23px;
  box-sizing: border-box;
  flex: none;
}

.gb.pressed {
  border: 1px solid #f4f4f4;
}

.gb.plain {
  margin: 0 1px;
}

.fx {
  width: 26px;
  text-align: center;
  flex: none;
  font-family: "Liberation Serif", serif;
  font-style: italic;
  font-weight: bold;
  font-size: 14px;
}

.fx sub {
  font-size: 10px;
}

.knob {
  display: block;
  flex: none;
}

.knob-val {
  font-size: 13px;
  text-anchor: middle;
}

.knob-lab {
  font-size: 10.5px;
  text-anchor: middle;
}

.knob-lab.off {
  fill: #a4a4a4;
}

.g2 {
  width: 105px;
}

.g3 {
  width: 125px;
  padding: 11px 0 0 8px;
}

.sync-row {
  display: flex;
  align-items: center;
  gap: 4px;
}

.sync-row.second {
  margin-top: 7px;
  gap: 0;
}

.sy {
  width: 24px;
  height: 22px;
  flex: none;
}

.sy.wide {
  margin: 0 3px 0 10px;
}

.sync-combo {
  width: 47px;
  height: 22px;
  background: none;
  border: 1px solid #888;
  padding-left: 5px;
  font-size: 13px;
}

.g4 {
  width: 134px;
  padding: 10px 0 0 3px;
}

.ctl-row {
  display: flex;
  gap: 3px;
  align-items: center;
}

.ctl-row + .ctl-row {
  margin-top: 3px;
}

.ctl {
  width: 40px;
  height: 27px;
  box-sizing: border-box;
  border: 1px solid #1c4a78;
  border-radius: 2px;
  background: linear-gradient(#eeeeee, #bcbcbc);
}

.ctl.mode {
  background: #fff;
  border-color: #e01010;
}

.start {
  width: 82px;
  height: 27px;
  box-sizing: border-box;
  border: 1px solid #1c3a68;
  outline: 1px dotted #222;
  outline-offset: -3px;
  background: linear-gradient(#eeeeee, #bcbcbc);
  justify-content: flex-start;
  padding-left: 10px;
  gap: 20px;
  font-size: 12px;
}

.tri-green {
  width: 0;
  height: 0;
  border: 8px solid transparent;
  border-right: none;
  border-left: 11px solid #10d810;
}

.rate {
  margin-left: 8px;
  color: #0a800a;
  font-weight: bold;
  font-size: 12.5px;
  padding-top: 12px;
}

.statusbar {
  display: flex;
  height: 19px;
  flex: none;
  gap: 3px;
  padding-top: 2px;
  box-sizing: border-box;
  background: #d1cdd2;
}

.cell {
  box-sizing: border-box;
  border-top: 1px solid #888;
  border-left: 1px solid #888;
  border-right: 1px solid #fff;
  display: flex;
  align-items: center;
  padding-left: 3px;
  font-size: 10.5px;
  white-space: nowrap;
}

.s1 {
  width: 189px;
}

.s2 {
  flex: 1;
}

.s3 {
  width: 47px;
  font-size: 12px;
}
</style>

<style>
html,
body {
  background: #fff;
  overflow: hidden;
}
</style>
